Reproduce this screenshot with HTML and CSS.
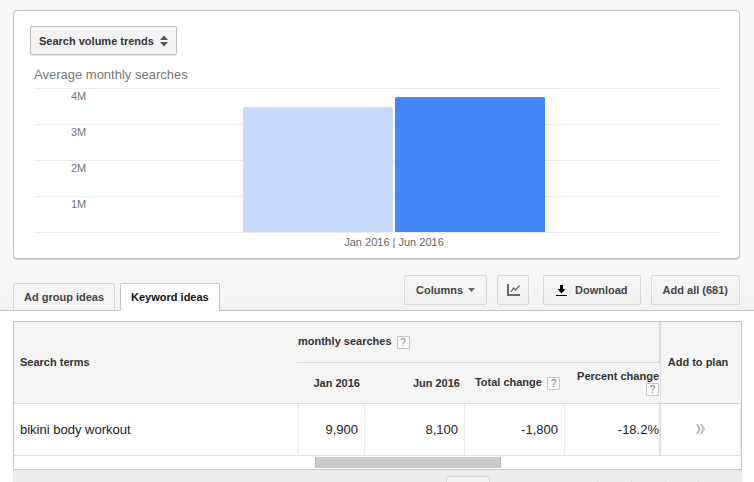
FILE: index.html
```html
<!DOCTYPE html>
<html lang="en">
<head>
    <meta charset="utf-8">
    <title>Keyword ideas</title>
    <link rel="stylesheet" href="styles.css">
</head>
<body>
    <div class="top">
        <section class="panel">
            <button type="button" class="btn trend-btn">
                Search volume trends
                <svg width="8" height="12" viewBox="0 0 8 12"><path d="M0 5L4 0.500L8 5zM0 7h8L4 11.500z" fill="#555"/></svg>
            </button>
            <h2>Average monthly searches</h2>
            <div class="chart">
                <div class="scale">
                    <div>4M</div>
                    <div>3M</div>
                    <div>2M</div>
                    <div>1M</div>
                </div>
                <div class="bars">
                    <div class="bar bar-jan" style="height: 87%"></div>
                    <div class="bar bar-jun" style="height: 94%"></div>
                </div>
            </div>
            <div class="chart-label">Jan 2016 | Jun 2016</div>
        </section>

        <div class="toolbar">
            <nav class="tabs">
                <a href="#" class="tab">Ad group ideas</a>
                <a href="#" class="tab active">Keyword ideas</a>
            </nav>
            <div class="actions">
                <button type="button" class="btn">
                    Columns
                    <svg class="caret" width="7" height="4" viewBox="0 0 7 4"><path d="M0 0h7L3.500 4z" fill="#666"/></svg>
                </button>
                <button type="button" class="btn btn-chart" aria-label="Show chart">
                    <svg width="13" height="12" viewBox="0 0 13 12" fill="none" stroke="#666"><path d="M1 0v11h12" stroke-width="2"/><path d="M4 8l2.500-4 2 2L12.500 1.500" stroke-width="1.300"/></svg>
                </button>
                <button type="button" class="btn btn-download">
                    <svg width="11" height="11" viewBox="0 0 11 11"><path d="M4 0h3v4h2.500l-4 4.500l-4-4.500H4zM0 10h11v1H0z" fill="#000"/></svg>
                    Download
                </button>
                <button type="button" class="btn">Add all (681)</button>
            </div>
        </div>
    </div>

    <div class="results">
        <table>
            <colgroup>
                <col>
                <col class="col-jan">
                <col class="col-month">
                <col class="col-month">
                <col class="col-percent">
                <col class="col-plan">
            </colgroup>
            <thead>
                <tr>
                    <th rowspan="2" class="term">Search terms</th>
                    <th colspan="4" class="group">monthly searches <button type="button" class="help">?</button></th>
                    <th rowspan="2" class="plan">Add to plan</th>
                </tr>
                <tr class="sub">
                    <th>Jan 2016</th>
                    <th>Jun 2016</th>
                    <th>Total change <button type="button" class="help">?</button></th>
                    <th class="percent">Percent change <button type="button" class="help">?</button></th>
                </tr>
            </thead>
            <tbody>
                <tr>
                    <td class="term">bikini body workout</td>
                    <td class="first">9,900</td>
                    <td>8,100</td>
                    <td>-1,800</td>
                    <td class="percent">-18.2%</td>
                    <td class="plan"><button type="button" class="add" aria-label="Add to plan"><svg width="9" height="10" viewBox="0 0 9 10" fill="#bbb"><path d="M0 0h2l3 5-3 5H0l2.500-5zM4 0h2l3 5-3 5H4l2.500-5z"/></svg></button></td>
                </tr>
            </tbody>
        </table>
        <div class="scroll"><div class="thumb"></div></div>
    </div>
    <div class="footer">
        <select class="rows" aria-label="Rows per page"></select>
        <div class="pager"><button type="button" aria-label="First"></button><button type="button" aria-label="Previous"></button><button type="button" aria-label="Next"></button></div>
    </div>
</body>
</html>
```

FILE: styles.css
```css
* {
    box-sizing: border-box;
}
body {
    display: flex;
    flex-direction: column;
    margin: 0;
    height: 100vh;
    font-family: "Liberation Sans", Arial, sans-serif;
    font-size: 11px;
    color: #222;
    background: #fff;
}
button {
    font-family: inherit;
    cursor: pointer;
}

.top {
    padding: 10px 14px 0 13px;
    background: linear-gradient(#f8f8f8 85%, #f2f2f2);
    border-bottom: 1px solid #c6c6c6;
}
.panel {
    padding: 15px 20px 9px;
    background: #fff;
    border: 1px solid #c3c3c3;
    border-radius: 4px;
    box-shadow: 0 1px 1px rgba(0, 0, 0, 0.15);
}
.btn {
    display: inline-flex;
    align-items: center;
    height: 30px;
    padding: 0 11px;
    background: linear-gradient(#f6f6f6, #f1f1f1);
    border: 1px solid #d8d8d8;
    border-radius: 2px;
    font-size: 11px;
    font-weight: bold;
    color: #444;
}
.trend-btn {
    gap: 6px;
    height: 29px;
    margin-left: -4px;
    padding: 0 8px;
    border-color: #c0c0c0;
    color: #333;
    box-shadow: 0 1px 1px rgba(0, 0, 0, 0.12);
}
.panel h2 {
    margin: 12px 0 5px;
    font-size: 13px;
    font-weight: normal;
    line-height: 16px;
    color: #777;
}

.chart {
    display: grid;
    border-bottom: 1px solid #ebebeb;
}
.scale,
.bars {
    grid-area: 1 / 1;
}
.scale div {
    height: 36px;
    padding: 1px 0 0 37px;
    border-top: 1px solid #ebebeb;
    line-height: 13px;
    color: #777;
}
.bars {
    display: flex;
    justify-content: center;
    align-items: flex-end;
    gap: 2px;
    padding-left: 35px;
}
.bar {
    width: 150px;
    border-radius: 2px 2px 0 0;
}
.bar-jan {
    background: #c6dafc;
}
.bar-jun {
    background: #4285f6;
}
.chart-label {
    padding: 3px 0 0 35px;
    text-align: center;
    line-height: 13px;
    color: #666;
}

.toolbar {
    display: flex;
    justify-content: space-between;
    align-items: flex-end;
    margin-top: 16px;
}
.tabs {
    display: flex;
    gap: 5px;
}
.tab {
    height: 27px;
    padding: 0 10px;
    border: 1px solid #d6d6d6;
    border-bottom: 0;
    border-radius: 2px 2px 0 0;
    background: #f4f4f4;
    font-weight: bold;
    line-height: 26px;
    text-decoration: none;
    color: #444;
}
.tab.active {
    height: 28px;
    margin-bottom: -1px;
    background: #fff;
    border-color: #c6c6c6;
    color: #111;
}
.actions {
    display: flex;
    gap: 10px;
    padding-bottom: 5px;
}
.caret {
    margin-left: 5px;
}
.btn-chart {
    justify-content: center;
    width: 32px;
    padding: 0;
}
.btn-download {
    gap: 8px;
    margin-left: 4px;
    padding: 0 12px;
}

.results {
    margin: 10px 12px 0 13px;
    border: 1px solid #c6c6c6;
}
table {
    width: 100%;
    table-layout: fixed;
    border-collapse: separate;
    border-spacing: 0;
}
.col-jan {
    width: 68px;
}
.col-month {
    width: 100px;
}
.col-percent {
    width: 95px;
}
.col-plan {
    width: 81px;
}
th,
td {
    padding: 0 6px;
    text-align: right;
}
th {
    height: 41px;
    background: #f5f5f5;
    border-bottom: 1px solid #d9d9d9;
    line-height: 13px;
    color: #333;
}
td {
    height: 52px;
    border-right: 1px solid #ececec;
    border-bottom: 1px solid #e2e2e2;
    font-size: 13px;
}
.term {
    text-align: left;
}
td.term {
    border-right: 0;
}
.first {
    border-left: 2px solid #f0f0f0;
}
.group {
    padding-left: 1px;
    text-align: left;
}
.sub th {
    white-space: nowrap;
    padding: 0 5px;
}
.sub .percent {
    padding: 0 1px;
    white-space: normal;
}
td.percent {
    padding-right: 1px;
    border-right: 0;
}
.plan {
    text-align: center;
    border-left: 1px solid #ddd;
    box-shadow: -1px 0 1px rgba(0, 0, 0, 0.1);
}
th.plan {
    padding: 0;
    padding-right: 6px;
}
.help {
    width: 13px;
    height: 13px;
    margin-left: 2px;
    padding: 0;
    vertical-align: middle;
    background: #fafafa;
    border: 1px solid #c6c6c6;
    border-radius: 1px;
    font-size: 10px;
    line-height: 11px;
    color: #888;
}
.add {
    padding: 0;
    border: 0;
    background: none;
}
.scroll {
    height: 13px;
    padding: 1px 0;
}
.thumb {
    width: 186px;
    height: 11px;
    margin-left: 301px;
    background: #c9c9c9;
    border: 1px solid #b4b4b4;
    border-width: 0 1px;
}

.footer {
    display: flex;
    flex: 1;
    justify-content: flex-end;
    align-items: flex-start;
    gap: 107px;
    min-height: 0;
    margin: 0 12px 0 13px;
    padding: 6px 43px 0 0;
    background: #ececec;
    overflow: hidden;
}
.rows {
    width: 44px;
    height: 24px;
    background: #f3f3f3;
    border: 1px solid #d6d6d6;
    border-radius: 2px;
    appearance: none;
}
.pager {
    display: flex;
    padding-top: 4px;
}
.pager button {
    width: 34px;
    height: 22px;
    padding: 0;
    background: none;
    border: 0;
    border-left: 1px solid #ddd;
}
.pager button:last-child {
    border-right: 1px solid #ddd;
}
```
